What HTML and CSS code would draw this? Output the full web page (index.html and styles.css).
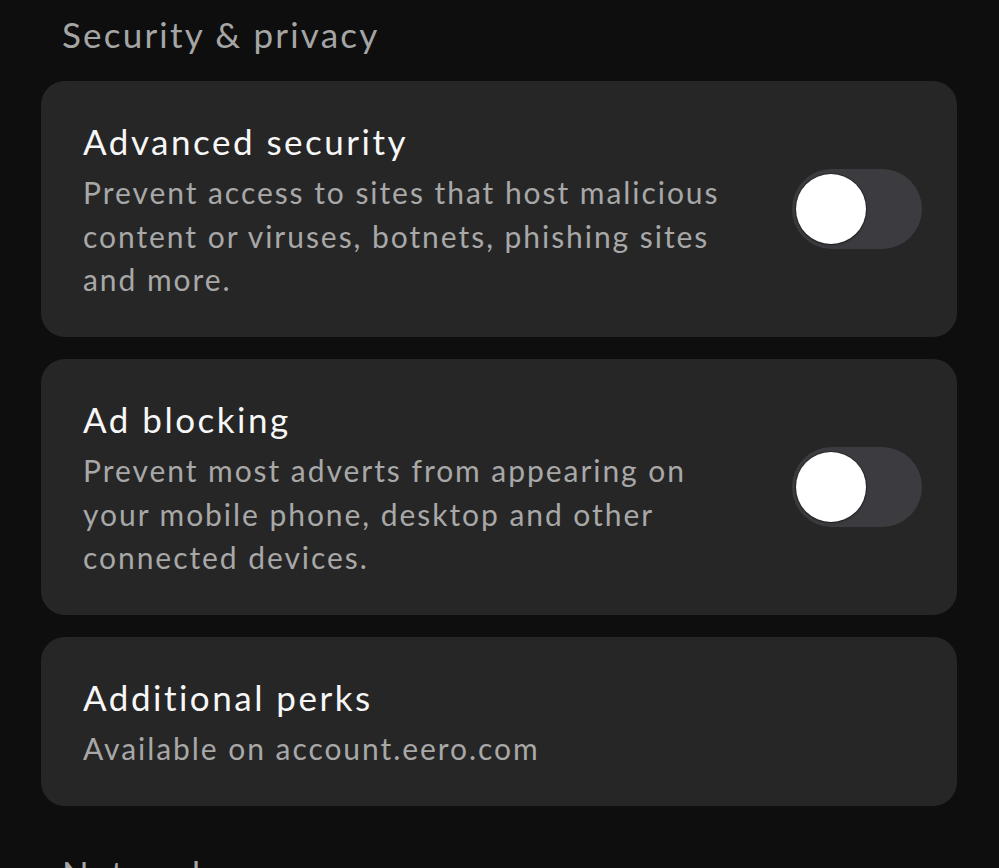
FILE: index.html
```html
<!DOCTYPE html>
<html lang="en">
<head>
<meta charset="utf-8">
<title>Security &amp; privacy</title>
<link rel="stylesheet" href="styles.css">
</head>
<body>
<main class="page">
  <h2 class="section-title">Security &amp; privacy</h2>
  <div class="cards">
    <div class="card">
      <div class="card-text">
        <div class="card-title">Advanced security</div>
        <div class="card-desc">Prevent access to sites that host malicious content or viruses, botnets, phishing sites and more.</div>
      </div>
      <div class="toggle"><div class="knob"></div></div>
    </div>
    <div class="card">
      <div class="card-text">
        <div class="card-title">Ad blocking</div>
        <div class="card-desc">Prevent most adverts from appearing on your mobile phone, desktop and other connected devices.</div>
      </div>
      <div class="toggle"><div class="knob"></div></div>
    </div>
    <div class="card card-short">
      <div class="card-text">
        <div class="card-title">Additional perks</div>
        <div class="card-desc">Available on account.eero.com</div>
      </div>
    </div>
  </div>
  <h2 class="section-title section-next">Network</h2>
</main>
</body>
</html>
```
FILE: styles.css
```css
html, body {
  margin: 0;
  padding: 0;
  background: #0e0e0e;
  height: 100%;
  overflow: hidden;
}
body {
  font-family: "Lato", "Noto Sans", sans-serif;
}
.page {
  padding: 13px 42px 0 41px;
}
.section-title {
  margin: 0 0 0 21px;
  font-size: 35px;
  line-height: 42px;
  font-weight: 400;
  letter-spacing: 2.2px;
  color: #a5a5a5;
}
.cards {
  margin-top: 26px;
  display: flex;
  flex-direction: column;
  gap: 22px;
}
.card {
  background: #262626;
  border-radius: 24px;
  padding: 36px 35px 35.5px 42px;
  display: flex;
  align-items: center;
  gap: 40px;
}
.card-short {
  padding-top: 35.75px;
  padding-bottom: 35.75px;
}
.card-text {
  flex: 1;
  min-width: 0;
}
.card-title {
  font-size: 35px;
  line-height: 48px;
  letter-spacing: 2.5px;
  color: #f7f7f7;
}
.card-desc {
  margin-top: 6px;
  font-size: 30px;
  line-height: 43.5px;
  letter-spacing: 1.95px;
  color: #a8a8a8;
  max-width: 660px;
}
.toggle {
  flex: none;
  width: 130px;
  height: 80px;
  border-radius: 40px;
  background: #3c3b40;
  display: flex;
  align-items: center;
  padding-left: 4px;
  box-sizing: border-box;
}
.knob {
  width: 70px;
  height: 70px;
  border-radius: 50%;
  background: #ffffff;
  box-shadow: 0 0 0 1px rgba(0,0,0,0.25), 0 1px 3px rgba(0,0,0,0.35);
}
.section-next {
  margin-top: 46px;
}
```
